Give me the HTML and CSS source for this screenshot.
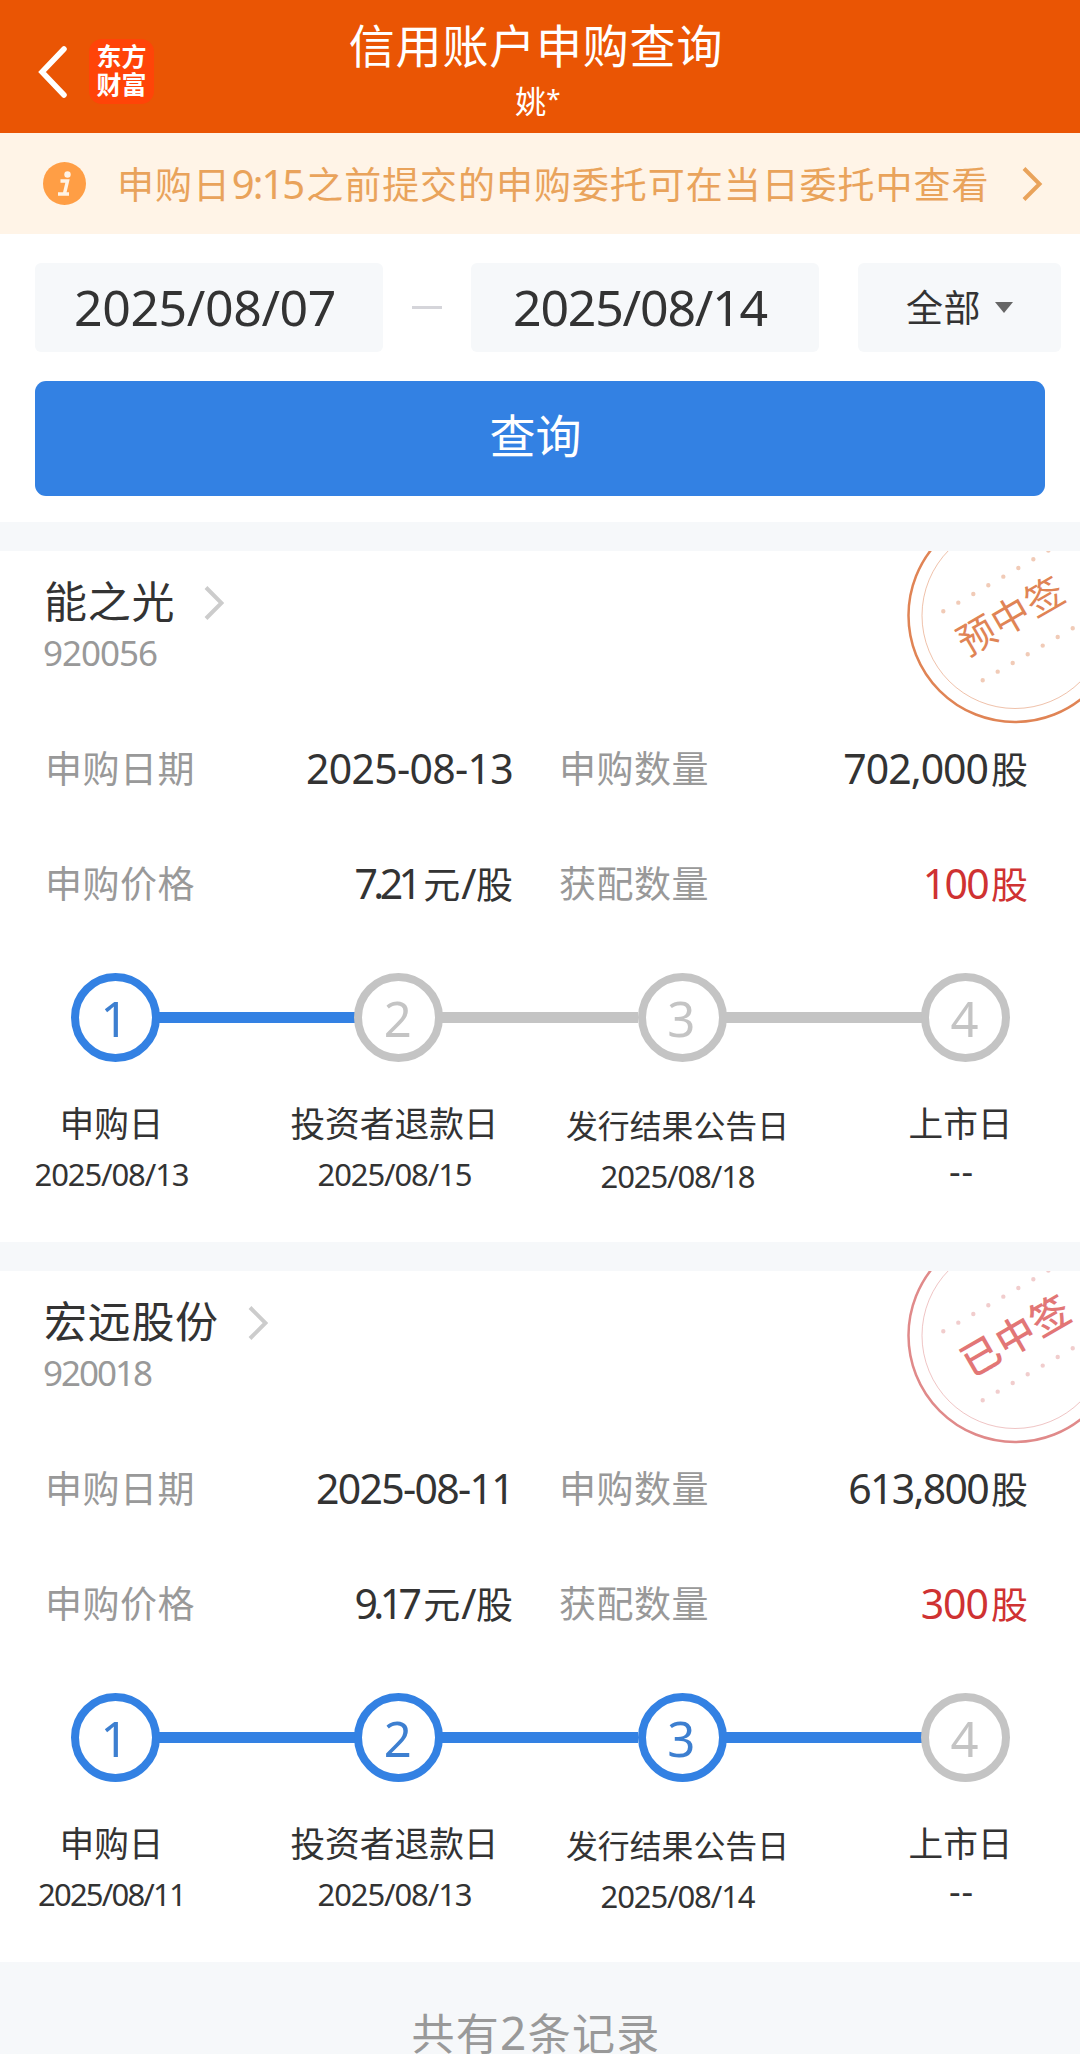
FILE: index.html
```html
<!DOCTYPE html>
<html lang="zh-CN">
<head>
  <meta charset="UTF-8" />
  <meta name="viewport" content="width=device-width, initial-scale=1" />
  <title>信用账户申购查询</title>
  <link rel="stylesheet" href="styles.css">
</head>
<body>
  <!-- 顶部导航 -->
  <header class="header">
    <svg class="back" width="30" height="54" viewBox="0 0 30 54"><path d="M26 4L4 27l22 23" fill="none" stroke="#fff" stroke-width="5.5" stroke-linecap="round"/></svg>
    <div class="logo">东方<br>财富</div>
    <div class="titles">
      <h1>信用账户申购查询</h1>
      <p>姚<small>*</small></p>
    </div>
  </header>

  <!-- 提示 -->
  <div class="notice">
    <svg class="info" width="43" height="43" viewBox="0 0 43 43">
      <circle cx="21.5" cy="21.5" r="21.5" fill="#ff9e45"/>
      <circle cx="24.5" cy="12.5" r="3.2" fill="#fff3e6"/>
      <path d="M17.5 19h7l-3 12.500M15 32h11" fill="none" stroke="#fff3e6" stroke-width="3.4"/>
    </svg>
    <p>申购日<span class="time">9:15</span>之前提交的申购委托可在当日委托中查看</p>
    <svg class="more" width="22" height="36" viewBox="0 0 22 36"><path d="M3 2.500L18.500 18 3 33.500" fill="none" stroke="#e9a35b" stroke-width="4"/></svg>
  </div>

  <!-- 查询条件 -->
  <section class="search">
    <div class="filters">
      <div class="date">2025/08/07</div>
      <i class="dash"></i>
      <div class="date date-end">2025/08/14</div>
      <div class="select">全部<i class="arrow"></i></div>
    </div>
    <button class="btn">查询</button>
  </section>

  <!-- 能之光 -->
  <section class="card">
    <div class="name">能之光<svg width="20" height="36" viewBox="0 0 20 36"><path d="M2 2.500L17.500 18 2 33.500" fill="none" stroke="#ccc" stroke-width="4"/></svg></div>
    <div class="code">920056</div>
    <svg class="stamp stamp-pre" width="180" height="180" viewBox="900 551 180 180">
      <circle class="ring" cx="1015" cy="615.5" r="106.500"/>
      <circle class="ring-in" cx="1015" cy="615.5" r="93"/>
      <path class="dots" d="M943.300 611.300l120-69.300M982.700 680.300l105-60.700"/>
      <text class="stamp-text" transform="translate(1011 616) rotate(-30)" y="14">预中签</text>
    </svg>
    <div class="grid">
      <span class="label">申购日期</span><span class="value day">2025-08-13</span>
      <span class="label">申购数量</span><span class="value">702,000<b>股</b></span>
      <span class="label">申购价格</span><span class="value price">7.21<b>元</b>/<b>股</b></span>
      <span class="label">获配数量</span><span class="value red tight">100<b>股</b></span>
    </div>
    <ol class="nums">
      <li class="on">1</li><li>2</li><li>3</li><li>4</li>
    </ol>
    <ol class="steps">
      <li><h3>申购日</h3><p>2025/08/13</p></li>
      <li><h3>投资者退款日</h3><p>2025/08/15</p></li>
      <li class="long"><h3>发行结果公告日</h3><p>2025/08/18</p></li>
      <li><h3>上市日</h3><p class="none">--</p></li>
    </ol>
  </section>

  <!-- 宏远股份 -->
  <section class="card">
    <div class="name">宏远股份<svg width="20" height="36" viewBox="0 0 20 36"><path d="M2 2.500L17.500 18 2 33.500" fill="none" stroke="#ccc" stroke-width="4"/></svg></div>
    <div class="code tight">920018</div>
    <svg class="stamp stamp-won" width="180" height="180" viewBox="900 551 180 180">
      <circle class="ring" cx="1015" cy="615.5" r="106.500"/>
      <circle class="ring-in" cx="1015" cy="615.5" r="93"/>
      <path class="dots" d="M943.300 611.300l120-69.300M982.700 680.300l105-60.700"/>
      <text class="stamp-text" transform="translate(1016 616) rotate(-30)" y="14">已中签</text>
    </svg>
    <div class="grid">
      <span class="label">申购日期</span><span class="value tight">2025-08-11</span>
      <span class="label">申购数量</span><span class="value tight">613,800<b>股</b></span>
      <span class="label">申购价格</span><span class="value price">9.17<b>元</b>/<b>股</b></span>
      <span class="label">获配数量</span><span class="value red">300<b>股</b></span>
    </div>
    <ol class="nums">
      <li class="on">1</li><li class="on">2</li><li class="on">3</li><li>4</li>
    </ol>
    <ol class="steps">
      <li><h3>申购日</h3><p class="tight">2025/08/11</p></li>
      <li><h3>投资者退款日</h3><p>2025/08/13</p></li>
      <li class="long"><h3>发行结果公告日</h3><p>2025/08/14</p></li>
      <li><h3>上市日</h3><p class="none">--</p></li>
    </ol>
  </section>

  <footer class="footer">共有<span>2</span>条记录</footer>
</body>
</html>
```
FILE: styles.css
```css
* { box-sizing: border-box; margin: 0; padding: 0; }
body {
  width: 1080px;
  height: 2054px;
  overflow: hidden;
  background: #f6f8fa;
  color: #333;
  font-family: "Noto Sans", "Noto Sans CJK SC", sans-serif;
}
h1, h3, b { font-weight: 400; }
ol { list-style: none; }

/* --- 顶部 --- */
.header {
  position: relative;
  display: flex;
  align-items: center;
  height: 133px;
  padding: 10px 0 0 38px;
  background: #ea5504;
  color: #fff;
}
.logo {
  width: 65px;
  height: 65px;
  margin-left: 21px;
  padding-top: 2px;
  border-radius: 13px;
  background: #ff4408;
  font: 700 25px/28px "Noto Sans CJK SC", sans-serif;
  text-align: center;
}
.titles {
  position: absolute;
  inset: 0;
  text-align: center;
}
.titles h1 {
  padding: 14px 8px 0 0;
  font-size: 46px;
  line-height: 62px;
  letter-spacing: .8px;
}
.titles p {
  padding-right: 4px;
  font-size: 31px;
  line-height: 50px;
}
.titles small { font-size: 26px; line-height: 1; vertical-align: 5px; }

/* --- 提示条 --- */
.notice {
  display: flex;
  align-items: center;
  height: 101px;
  padding: 0 37px 0 43px;
  background: #fff4e7;
  color: #e9a35b;
}
.notice p {
  margin-left: 31px;
  font-size: 37px;
  letter-spacing: .95px;
  white-space: nowrap;
}
.time { margin: 0 3px 0 1px; font-size: 40px; letter-spacing: -2px; }
.more { margin-left: auto; }

/* --- 查询 --- */
.search {
  height: 288px;
  padding: 29px 35px 0;
  background: #fff;
}
.filters { display: flex; align-items: center; width: 1026px; height: 89px; }
.date, .select {
  height: 89px;
  border-radius: 6px;
  background: #f6f8fa;
  line-height: 89px;
}
.date {
  width: 348px;
  padding-left: 39px;
  font-size: 50px;
  letter-spacing: -.4px;
}
.date-end { padding-left: 42px; letter-spacing: -1.2px; }
.dash { width: 30px; height: 3px; margin: 0 29px; background: #d5d5da; }
.select {
  display: flex;
  align-items: center;
  justify-content: center;
  width: 203px;
  margin-left: 39px;
  font-size: 37px;
  letter-spacing: .5px;
}
.arrow {
  margin-left: 14px;
  border: 9.5px solid transparent;
  border-top: 11px solid #666;
  border-bottom: 0;
}
.btn {
  display: block;
  width: 1010px;
  height: 115px;
  margin-top: 29px;
  padding: 0 9px 11px 0;
  border: none;
  border-radius: 11px;
  background: #3381e3;
  color: #fff;
  font: 46px "Noto Sans CJK SC", sans-serif;
}

/* --- 申购记录 --- */
.card {
  position: relative;
  height: 691px;
  margin-top: 29px;
  padding-top: 17px;
  background: #fff;
}
.name {
  display: flex;
  align-items: center;
  height: 62px;
  padding-left: 44px;
  font-size: 43px;
  letter-spacing: .7px;
}
.name svg { margin: 7px 0 0 29px; }
.code {
  height: 43px;
  padding-left: 43px;
  color: #999;
  font-size: 35px;
  line-height: 46px;
  letter-spacing: -1px;
}
.code.tight { letter-spacing: -2px; }
.stamp { position: absolute; top: 0; right: 0; }
.ring { fill: none; stroke: currentColor; stroke-width: 2.5; }
.ring-in { fill: none; stroke: currentColor; stroke-width: 1; opacity: .5; }
.dots {
  stroke: currentColor;
  stroke-width: 4.4;
  stroke-linecap: round;
  stroke-dasharray: 0 17.33;
  opacity: .42;
}
.stamp-text { fill: currentColor; font-size: 38px; text-anchor: middle; letter-spacing: 1px; }
.stamp-pre { color: #e08455; }
.stamp-won { color: #e08a8a; }
.stamp-won .stamp-text { fill: #e27676; font-size: 39px; font-weight: 500; }

.grid {
  display: grid;
  grid-template-columns: 150px 318px 197px 318px;
  grid-auto-rows: 115px;
  height: 230px;
  margin: 36px 0 0 45px;
  align-items: center;
}
.label { color: #999; font-size: 37px; letter-spacing: .5px; }
.value {
  padding-top: 2px;
  font-size: 41px;
  letter-spacing: -1px;
  text-align: right;
  white-space: nowrap;
}
.value b { margin-left: 3px; font-size: 37px; letter-spacing: 0; }
.value.day { letter-spacing: -.7px; }
.value.tight { letter-spacing: -1.7px; }
.value.price { letter-spacing: -4.6px; }
.price b:first-child { margin: 0 1px 0 6px; }
.price b:last-child { margin-left: 4px; }
.label:nth-child(4n + 3) { padding-left: 46px; }
.red { color: #cf3232; }

/* --- 进度 --- */
.nums {
  display: flex;
  justify-content: space-between;
  width: 939px;
  margin: 34px 0 0 71px;
}
.nums li {
  position: relative;
  width: 89px;
  height: 89px;
  border: 8px solid #c4c4c4;
  border-radius: 50%;
  color: #c4c4c4;
  font-size: 49px;
  line-height: 74px;
  text-align: center;
  text-indent: -2px;
}
.nums li:not(:last-child)::after {
  content: "";
  position: absolute;
  top: 31px;
  left: 79px;
  width: 197px;
  height: 11px;
  background: #c4c4c4;
}
.nums .on { border-color: #3381e3; color: #3d7fd0; }
.nums .on::after { background: #3381e3 !important; }
.steps {
  display: grid;
  grid-template-columns: repeat(4, 283px);
  margin: 35px 0 0 -30px;
  text-align: center;
}
.steps h3 { font-size: 34.7px; line-height: 54px; }
.steps p { font-size: 31px; line-height: 46px; letter-spacing: -1.1px; }
.steps p.tight { letter-spacing: -1.8px; }
.steps p.none { padding-left: 2px; line-height: 40px; font-size: 36px; letter-spacing: 1px; }
.steps .long h3 { padding-top: 2px; font-size: 31.9px; }

.footer {
  padding: 40px 8px 0 0;
  color: #999;
  font-size: 43px;
  line-height: 60px;
  letter-spacing: 1.3px;
  text-align: center;
}
.footer span { font-size: 46px; }
```
